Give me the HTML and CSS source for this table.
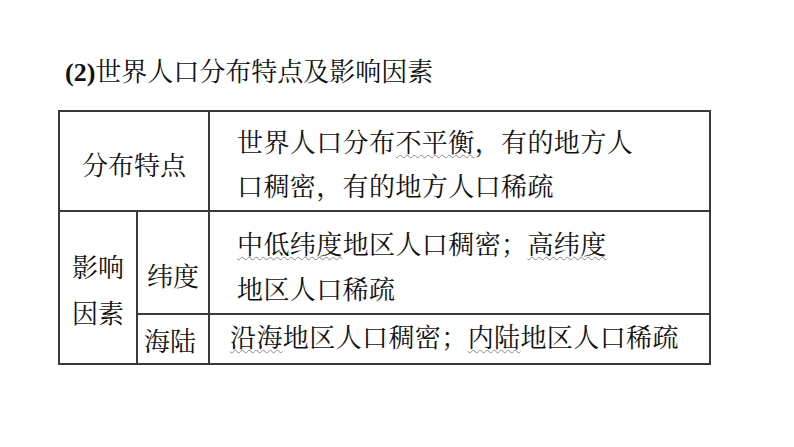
FILE: index.html
```html
<!DOCTYPE html>
<html lang="zh-CN">
<head>
<meta charset="utf-8">
<link rel="stylesheet" href="styles.css">
</head>
<body>
<div class="page">
  <h1 class="title"><span class="num">(2)</span>世界人口分布特点及影响因素</h1>
  <table class="grid">
    <colgroup>
      <col class="c1">
      <col class="c2">
      <col class="c3">
    </colgroup>
    <tr class="r1">
      <td colspan="2" class="head head-r1">分布特点</td>
      <td class="body body-r1">世界人口分布<span class="wavy">不平衡</span>，有的地方人<br>口稠密，有的地方人口稀疏</td>
    </tr>
    <tr class="r2">
      <td rowspan="2" class="head head-factor">影响<br>因素</td>
      <td class="head head-lat">纬度</td>
      <td class="body body-r2"><span class="wavy">中低纬度</span>地区人口稠密；<span class="wavy">高纬度</span><br>地区人口稀疏</td>
    </tr>
    <tr class="r3">
      <td class="head head-sea">海陆</td>
      <td class="body body-r3"><span class="wavy">沿海</span>地区人口稠密；<span class="wavy">内陆</span>地区人口稀疏</td>
    </tr>
  </table>
</div>
</body>
</html>
```
FILE: styles.css
```css
html, body {
  margin: 0;
  padding: 0;
  background: #ffffff;
}

body {
  font-family: "Liberation Serif", "Noto Serif CJK SC", "Noto Sans CJK SC", serif;
  color: #111111;
}

.page {
  padding: 56px 0 0 58px;
}

.title {
  margin: 0;
  padding-left: 7px;
  font-size: 26px;
  line-height: 34px;
  font-weight: normal;
  color: #111111;
}

.title .num {
  font-weight: bold;
}

.grid {
  margin-top: 20px;
  border-collapse: collapse;
  table-layout: fixed;
  width: 651px;
  font-size: 26px;
}

.c1 { width: 78px; }
.c2 { width: 72px; }
.c3 { width: 501px; }

.grid td {
  border: 2px solid #3a3a3a;
  padding: 0;
  vertical-align: top;
  white-space: nowrap;
}

.r1 { height: 100px; }
.r2 { height: 100px; }
.r3 { height: 50px; }

.head {
  text-align: center;
}

.head-r1 {
  padding-top: 33px !important;
  line-height: 44px;
}

.head-factor {
  padding-top: 34px !important;
  line-height: 46px;
}

.head-lat {
  padding-top: 43px !important;
  line-height: 45px;
}

.head-sea {
  padding-top: 8px !important;
  padding-right: 6px !important;
  line-height: 40px;
}

.body {
  text-align: left;
  letter-spacing: 0.4px;
}

.body-r1 {
  padding: 10px 0 0 27px !important;
  line-height: 44px;
}

.body-r2 {
  padding: 11px 0 0 27px !important;
  line-height: 45px;
}

.body-r3 {
  padding: 4px 0 0 20px !important;
  line-height: 40px;
}

.wavy {
  text-decoration-line: underline;
  text-decoration-style: wavy;
  text-decoration-color: #8a8a8a;
  text-decoration-thickness: 1px;
  text-underline-offset: 2px;
}
```
